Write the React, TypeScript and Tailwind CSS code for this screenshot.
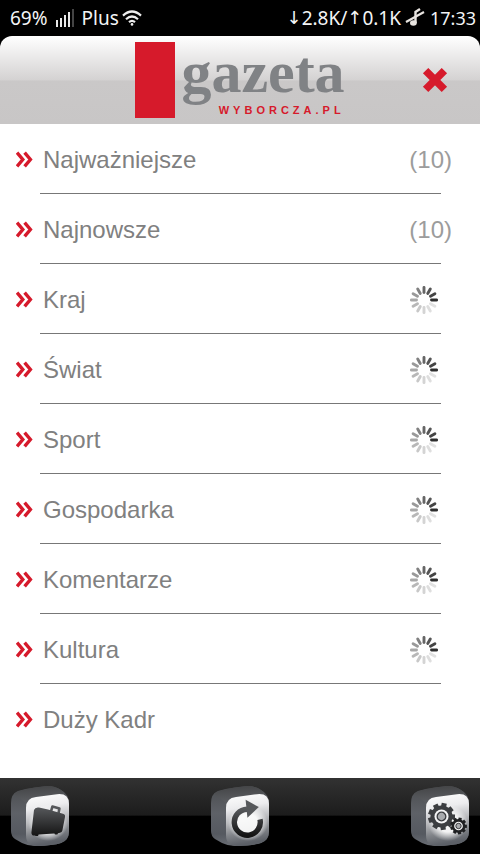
import React from 'react';

interface Section {
  name: string;
  count?: number;
  loading?: boolean;
}

const sections: Section[] = [
  { name: 'Najważniejsze', count: 10 },
  { name: 'Najnowsze', count: 10 },
  { name: 'Kraj', loading: true },
  { name: 'Świat', loading: true },
  { name: 'Sport', loading: true },
  { name: 'Gospodarka', loading: true },
  { name: 'Komentarze', loading: true },
  { name: 'Kultura', loading: true },
  { name: 'Duży Kadr' },
];

// Starts at 3 o'clock and goes counter-clockwise
const spokes = ['#2e2e2e', '#444444', '#555555', '#666666', '#808080', '#999999', '#a8a8a8', '#b8b8b8', '#c8c8c8', '#d4d4d4', '#dedede', '#e2e2e2'];

const Spinner = () => (
  <svg role="status" aria-label="Ładowanie" viewBox="-14 -14 28 28" className="mr-[14px] h-7 w-7">
    {spokes.map((color, i) => (
      <line key={i} x1="7.5" y1="0" x2="12.6" y2="0" stroke={color} strokeWidth="2.9" strokeLinecap="round" transform={`rotate(${-30 * i})`} />
    ))}
  </svg>
);

const Chevrons = () => (
  <svg viewBox="0 0 17 17" aria-hidden="true" className="h-[17px] w-[17px]" fill="none" stroke="#d61a2b" strokeWidth="3.4">
    <path d="M1 1.6L6.8 8.5L1 15.4" />
    <path d="M8.6 1.6L14.4 8.5L8.6 15.4" />
  </svg>
);

const Tile = ({ id, children }: { id: string; children: React.ReactNode }) => (
  <svg viewBox="0 0 58 60" aria-hidden="true" className="h-[60px] w-[58px]">
    <defs>
      <linearGradient id={`${id}-side`} x1="0" y1="0" x2="0" y2="1">
        <stop offset="0" stopColor="#4a4c4f" />
        <stop offset="0.45" stopColor="#5e6167" />
        <stop offset="0.8" stopColor="#555960" />
        <stop offset="1" stopColor="#6a6e75" />
      </linearGradient>
      <linearGradient id={`${id}-top`} x1="0" y1="0" x2="0.1" y2="1">
        <stop offset="0" stopColor="#434446" />
        <stop offset="1" stopColor="#5c5e62" />
      </linearGradient>
      <linearGradient id={`${id}-face`} x1="0" y1="0" x2="0.15" y2="1">
        <stop offset="0" stopColor="#ffffff" />
        <stop offset="0.3" stopColor="#ececee" />
        <stop offset="0.55" stopColor="#bcbdc0" />
        <stop offset="0.8" stopColor="#808388" />
        <stop offset="1" stopColor="#5c6067" />
      </linearGradient>
      <radialGradient id={`${id}-glow`}>
        <stop offset="0.5" stopColor="#ffffff" stopOpacity="0.9" />
        <stop offset="1" stopColor="#ffffff" stopOpacity="0" />
      </radialGradient>
      <linearGradient id={`${id}-ink`} x1="0" y1="0" x2="0" y2="1">
        <stop offset="0" stopColor="#56585b" />
        <stop offset="1" stopColor="#141414" />
      </linearGradient>
    </defs>
    <path d="M0 17Q0 8 6 5.4Q12 2.8 34 0.2Q43 -0.6 50 4Q58 8 58 18V46Q58 54 50 57Q42 59.6 24 60Q17 60 11 57L4 53Q0 50 0 45Z" fill={`url(#${id}-side)`} />
    <path d="M3 8Q5 5.6 10 4.4Q20 1.8 34 0.2Q43 -0.6 50 4L53 7.4L25 10.4Q18 11.4 15.4 17Z" fill={`url(#${id}-top)`} />
    <path d="M15 22Q15 12 25 11L46 8.2Q58 7 58 18V45Q58 54 50 57Q42 59.6 26 60Q15 60 15 49Z" fill={`url(#${id}-face)`} />
    <ellipse cx="37" cy="37" rx="20" ry="18" fill={`url(#${id}-glow)`} />
    {children}
  </svg>
);

const BagIcon = () => (
  <Tile id="bag">
    <path d="M40 25.4L41.4 20.6L48.4 22.4L47.4 28" fill="none" stroke="#55575a" strokeWidth="2.6" strokeLinejoin="round" />
    <path d="M23 24Q24 21 28 21.6L37 23.6L52 27.8Q54.6 28.6 54 31L51.4 44.5Q51 46.6 49 46.8L47 47.2L46.4 48.4H44L43.4 47.4L27.6 48.6L27 50H24.6L24 49.4Q20.4 50 20.4 46.4Z" fill="url(#bag-ink)" />
  </Tile>
);

const RefreshIcon = () => (
  <Tile id="refresh">
    <path d="M49 33.4A13 13 0 1 1 36 23.2" fill="none" stroke="url(#refresh-ink)" strokeWidth="5.4" />
    <path d="M34.6 13.8L47.8 21L36.4 31.8Z" fill="#56585b" />
  </Tile>
);

const Gear = ({ cx, cy, r, ink }: { cx: number; cy: number; r: number; ink: string }) => (
  <g transform={`translate(${cx} ${cy})`}>
    {Array.from({ length: 9 }, (_, i) => (
      <rect key={i} x={-r * 0.19} y={-r} width={r * 0.38} height={r * 0.4} fill={ink} transform={`rotate(${40 * i + 12})`} />
    ))}
    <circle r={r * 0.82} fill={ink} />
    <circle r={r * 0.52} fill="#f4f4f5" />
    <circle r={r * 0.32} fill="#a9abae" stroke={ink} strokeWidth={r * 0.1} />
  </g>
);

const SettingsIcon = () => (
  <Tile id="gears">
    <Gear cx={30.5} cy={30.5} r={13.5} ink="#3c3e41" />
    <Gear cx={47.5} cy={40} r={8.4} ink="#1f2022" />
  </Tile>
);

const StatusBar = () => (
  <div className="flex h-9 items-center justify-between pr-1 pl-[10px] font-['Noto_Sans',sans-serif] text-[19px] leading-6 text-gray-100">
    <div className="flex items-center">
      <span>69%</span>
      <svg viewBox="0 0 18 18" aria-label="Zasięg" className="mr-2 ml-2 h-[18px] w-[18px]" fill="#e8e8e8">
        <path d="M0 11h2v7H0zM4 9h2v9H4zM8 6h2v12H8zM12 3h2v15h-2z" />
        <path d="M16 0h2v18h-2z" fill="#444444" />
      </svg>
      <span>Plus</span>
      <svg viewBox="0 0 20 16" aria-label="Wi-Fi" className="ml-[3px] h-4 w-5" fill="none" stroke="#eeeeee" strokeWidth="2.2">
        <path d="M1 5.6Q10 -2.6 19 5.6M4 9.2Q10 3.8 16 9.2M7 12.2Q10 9.6 13 12.2" />
        <circle cx="10" cy="14.4" r="1.3" fill="#eeeeee" stroke="none" />
      </svg>
    </div>
    <div className="flex items-center">
      <span className="font-['DejaVu_Sans',sans-serif] text-lg leading-6">↓</span>
      <span>2.8K/</span>
      <span className="font-['DejaVu_Sans',sans-serif] text-lg leading-6">↑</span>
      <span>0.1K</span>
      <svg viewBox="0 0 20 20" aria-label="Wyciszony" className="mr-[5px] ml-1 h-5 w-5" fill="none" stroke="#e8e4e0" strokeWidth="2">
        <path d="M1 14L19 4" strokeWidth="2.2" />
        <path d="M10.5 15V4L15 1" strokeWidth="2.4" />
        <ellipse cx="8.4" cy="15" rx="3.4" ry="2.8" fill="#e8e4e0" stroke="none" />
      </svg>
      <span className="text-lg leading-6">17:33</span>
    </div>
  </div>
);

export default function App() {
  return (
    <div className="flex min-h-screen flex-col bg-black font-['Liberation_Sans',Arial,sans-serif]">
      <StatusBar />

      <header className="grid h-[88px] grid-cols-[1fr_auto_1fr] items-center rounded-t-xl bg-[linear-gradient(#ffffff,#d4d2d2_50%,#cac8c8_51%,#c8c6c6)]">
        <h1 className="col-start-2 flex items-center gap-[6px]">
          <span className="h-[76px] w-10 bg-[#d61a2b]" />
          <span className="flex flex-col items-end gap-1">
            <span className="font-['Liberation_Serif',serif] text-[60px] leading-[56px] font-bold text-[#808285]">gazeta</span>
            <span className="text-[11px] leading-3 font-bold tracking-[4px] text-[#d61a2b]">WYBORCZA.PL</span>
          </span>
        </h1>
        <button type="button" aria-label="Zamknij" className="mr-8 justify-self-end">
          <svg viewBox="0 0 26 26" aria-hidden="true" className="h-[26px] w-[26px]" stroke="#d61a2b" strokeWidth="7.6">
            <path d="M3.6 3.6L22.4 22.4M22.4 3.6L3.6 22.4" />
          </svg>
        </button>
      </header>

      <main className="flex-1 bg-white pb-6">
        <ul>
          {sections.map((section) => (
            <li key={section.name} className="group">
              <a href="#" className="flex h-[69px] items-center pt-[2px] pr-7 pl-4 text-2xl text-[#808080]">
                <Chevrons />
                <span className="ml-[10px] flex-1">{section.name}</span>
                {section.count && <span className="text-[#9c9c9c]">({section.count})</span>}
                {section.loading && <Spinner />}
              </a>
              <div className="mr-[39px] ml-10 h-px bg-[#777777] group-last:bg-transparent" />
            </li>
          ))}
        </ul>
      </main>

      <footer className="flex h-[76px] items-start justify-between bg-[linear-gradient(#323232,#1c1c1c_49%,#000000_50%)] px-[11px] pt-2">
        <button type="button" aria-label="Archiwum"><BagIcon /></button>
        <button type="button" aria-label="Odśwież"><RefreshIcon /></button>
        <button type="button" aria-label="Ustawienia"><SettingsIcon /></button>
      </footer>
    </div>
  );
}
